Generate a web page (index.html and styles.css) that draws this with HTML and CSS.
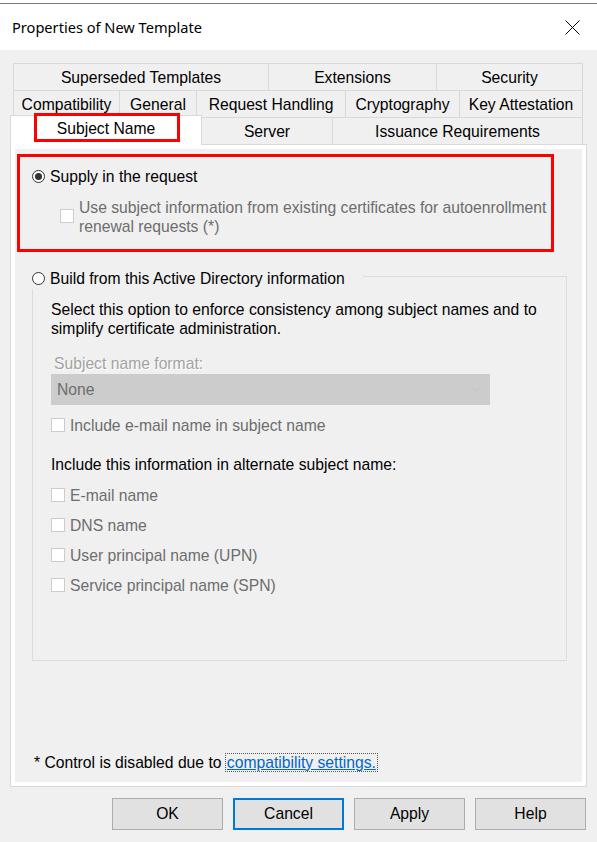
FILE: index.html
```html
<!DOCTYPE html>
<html>
<head>
<meta charset="utf-8">
<link rel="stylesheet" href="styles.css">
</head>
<body>
<div class="frame">
  <div class="titlebar">
    <span class="title">Properties of New Template</span>
    <svg class="close" width="15" height="15" viewBox="0 0 15 15"><path d="M0.5 0.5 L14.5 14.5 M14.5 0.5 L0.5 14.5" stroke="#000" stroke-width="1" fill="none"/></svg>
  </div>
</div>
<div class="dialog">
  <div class="tabstrip">
    <div class="tab-row">
      <div class="tab w255">Superseded Templates</div>
      <div class="tab w168">Extensions</div>
      <div class="tab w147 last">Security</div>
    </div>
    <div class="tab-row">
      <div class="tab w106">Compatibility</div>
      <div class="tab w77">General</div>
      <div class="tab w149">Request Handling</div>
      <div class="tab w114">Cryptography</div>
      <div class="tab w124 last">Key Attestation</div>
    </div>
    <div class="tab-row front">
      <div class="tab selected w192">Subject Name<span class="mark"></span></div>
      <div class="tab w130">Server</div>
      <div class="tab w251 last">Issuance Requirements</div>
    </div>
  </div>
  <div class="panel">
    <div class="page">
      <div class="supply">
        <div class="radio-row">
          <span class="radio checked"></span>
          <span class="label">Supply in the request</span>
        </div>
        <div class="check-row disabled wrap">
          <span class="checkbox"></span>
          <span class="label">Use subject information from existing certificates for autoenrollment<br>renewal requests (*)</span>
        </div>
      </div>
      <div class="group">
        <div class="group-head">
          <span class="radio"></span>
          <span class="label">Build from this Active Directory information</span>
        </div>
        <p class="desc">Select this option to enforce consistency among subject names and to<br>simplify certificate administration.</p>
        <div class="static-disabled">Subject name format:</div>
        <div class="combo">
          <span>None</span>
          <svg width="9" height="5" viewBox="0 0 9 5"><path d="M0.5 0.5 L4.5 4.5 L8.5 0.5" stroke="#c4bfae" stroke-width="1" fill="none"/></svg>
        </div>
        <div class="check-row disabled first">
          <span class="checkbox"></span>
          <span class="label">Include e-mail name in subject name</span>
        </div>
        <div class="alt-title">Include this information in alternate subject name:</div>
        <div class="check-row disabled alt">
          <span class="checkbox"></span>
          <span class="label">E-mail name</span>
        </div>
        <div class="check-row disabled alt">
          <span class="checkbox"></span>
          <span class="label">DNS name</span>
        </div>
        <div class="check-row disabled alt">
          <span class="checkbox"></span>
          <span class="label">User principal name (UPN)</span>
        </div>
        <div class="check-row disabled alt">
          <span class="checkbox"></span>
          <span class="label">Service principal name (SPN)</span>
        </div>
      </div>
      <div class="footnote">* Control is disabled due to <a class="link" href="#">compatibility settings.</a></div>
    </div>
  </div>
  <div class="buttons">
    <div class="btn">OK</div>
    <div class="btn default">Cancel</div>
    <div class="btn">Apply</div>
    <div class="btn">Help</div>
  </div>
</div>
</body>
</html>
```

FILE: styles.css
```css
* { box-sizing: border-box; }
html, body { margin: 0; padding: 0; }
body {
  width: 597px;
  height: 842px;
  overflow: hidden;
  background: #f0f0f0;
  font-family: "Liberation Sans", Arial, sans-serif;
  font-size: 15.7px;
  color: #000;
}
.frame { background: #fff; padding-top: 3px; }
.titlebar {
  height: 47px;
  border-top: 1px solid #7a7a7a;
  display: flex;
  align-items: center;
  justify-content: space-between;
  padding: 0 17px 0 12px;
}
.title {
  font-family: "Noto Sans", "Open Sans", sans-serif;
  font-size: 14.6px;
  color: #000;
}
.close { display: block; }

.dialog { background: #f0f0f0; }
.tabstrip { padding-top: 13px; }
.tab-row { display: flex; margin-left: 13px; height: 27px; }
.tab {
  height: 27px;
  border-top: 1px solid #d9d9d9;
  border-left: 1px solid #d9d9d9;
  display: flex;
  align-items: center;
  justify-content: center;
  white-space: nowrap;
  background: #f0f0f0;
  padding-top: 2px;
}
.tab.last { border-right: 1px solid #d9d9d9; }
.tab-row.front { margin-left: 10px; height: 27px; align-items: flex-start; }
.tab.selected {
  position: relative;
  z-index: 2;
  height: 30px;
  margin-top: -2px;
  background: #fff;
  border-right: 1px solid #d9d9d9;
  padding-top: 0;
  padding-bottom: 3px;
}
.tab.selected + .tab { border-left: none; }
.mark {
  position: absolute;
  left: 23px;
  top: -3px;
  width: 146px;
  height: 29px;
  border: 3px solid #ff0000;
}
.w255 { width: 255px; } .w168 { width: 168px; } .w147 { width: 147px; }
.w106 { width: 106px; } .w77 { width: 77px; } .w149 { width: 149px; }
.w114 { width: 114px; } .w124 { width: 124px; }
.w192 { width: 192px; } .w130 { width: 130px; } .w251 { width: 251px; }

.panel {
  position: relative;
  z-index: 1;
  margin-left: 10px;
  width: 577px;
  height: 643px;
  border: 1px solid #d9d9d9;
  background: #fff;
  padding: 4px;
}
.page {
  height: 100%;
  background: #f0f0f0;
  display: flex;
  flex-direction: column;
  align-items: flex-start;
}

.radio {
  width: 13px;
  height: 13px;
  border: 1px solid #333;
  border-radius: 50%;
  background: #fff;
  flex: none;
  display: flex;
  align-items: center;
  justify-content: center;
}
.radio.checked::after {
  content: "";
  width: 7px;
  height: 7px;
  border-radius: 50%;
  background: #333;
}
.checkbox {
  width: 14px;
  height: 14px;
  border: 1px solid #cccccc;
  background: #fff;
  flex: none;
}
.label { white-space: nowrap; line-height: 19px; }

.supply {
  margin: 5px 0 0 2px;
  width: 537px;
  height: 98px;
  border: 3px solid #ff0000;
  padding: 9px 0 0 12px;
}
.radio-row { display: flex; align-items: center; height: 20px; gap: 5px; }
.check-row { display: flex; align-items: center; gap: 5px; }
.check-row.disabled .label { color: #6d6d6d; }
.check-row.wrap { margin: 12px 0 0 28px; }
.check-row.wrap .checkbox { margin-top: -2px; }

.group {
  margin: 24px 0 0 17px;
  width: 535px;
  height: 385px;
  border: 1px solid #dcdcdc;
  padding-left: 18px;
  display: flex;
  flex-direction: column;
  align-items: flex-start;
}
.group-head {
  position: relative;
  margin: -10px 0 0 -21px;
  height: 22px;
  background: #f0f0f0;
  display: flex;
  align-items: center;
  gap: 5px;
  padding: 0 18px 0 2px;
}
.desc { margin: 11px 0 0 0; line-height: 19px; white-space: nowrap; }
.static-disabled {
  margin-top: 16px;
  padding-left: 3px;
  line-height: 19px;
  color: #a3a3a3;
  text-shadow: 1px 1px 0 #ffffff;
}
.combo {
  margin-top: 1px;
  width: 439px;
  height: 31px;
  background: #cccccc;
  color: #6d6d6d;
  display: flex;
  align-items: center;
  justify-content: space-between;
  padding: 0 10px 0 6px;
}
.combo svg { display: block; }
.check-row.first { margin-top: 10px; height: 20px; }
.alt-title { margin-top: 20px; line-height: 19px; }
.check-row.alt { margin-top: 10px; height: 20px; }
.alt-title + .check-row.alt { margin-top: 11px; }

.footnote {
  margin-top: auto;
  margin-bottom: 9px;
  padding-left: 19px;
  line-height: 20px;
  white-space: nowrap;
}
.link {
  color: #0066cc;
  text-decoration: underline;
  outline: 1px dotted #555;
  outline-offset: 0;
  padding: 0 1px;
}

.buttons {
  display: flex;
  justify-content: flex-end;
  gap: 10px;
  padding-right: 11px;
  margin-top: 11px;
}
.btn {
  width: 111px;
  height: 32px;
  background: #e1e1e1;
  border: 1px solid #adadad;
  display: flex;
  align-items: center;
  justify-content: center;
}
.btn.default { border: 2px solid #0078d7; }
```
